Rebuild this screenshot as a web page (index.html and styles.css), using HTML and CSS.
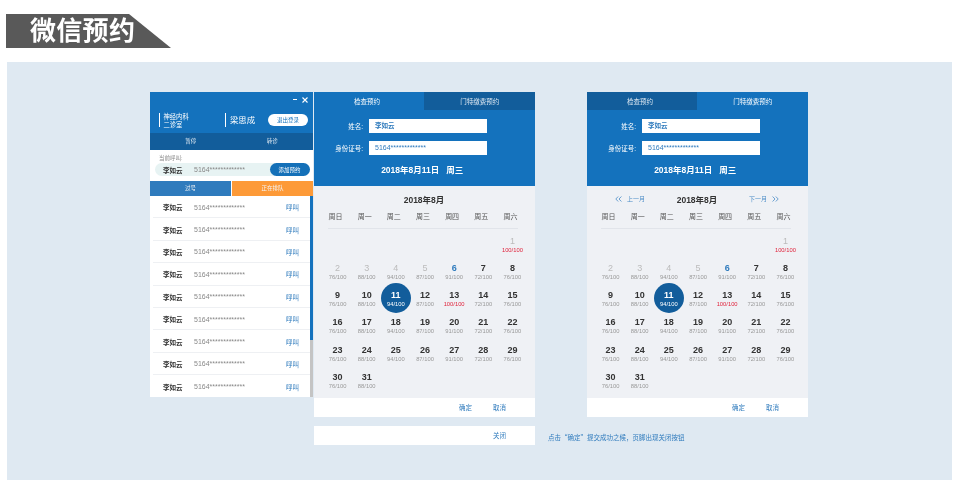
FILE: index.html
```html
<!DOCTYPE html>
<html lang="zh-CN">
<head>
    <meta charset="UTF-8">
    <title>微信预约</title>
    <link rel="stylesheet" href="styles.css">
</head>
<body>
    <header class="banner"><h1>微信预约</h1></header>

    <main class="stage">
        <!-- 医生端 -->
        <section class="desk">
            <div class="desk-head">
                <div class="win-btns">
                    <span class="win-min"></span>
                    <svg class="win-close" width="6" height="6" viewBox="0 0 6 6"><path d="M.5.5l5 5M5.5.5l-5 5" stroke="#fff" stroke-width="1.1"/></svg>
                </div>
                <div class="desk-info">
                    <div class="dept">神经内科<br>二诊室</div>
                    <div class="doctor">梁思成</div>
                    <button class="logout">退出登录</button>
                </div>
            </div>
            <div class="desk-actions"><span>暂停</span><span>转诊</span></div>
            <div class="current">
                <div class="current-label">当前呼叫:</div>
                <div class="current-row">
                    <b>李如云</b><span class="id-no">5164*************</span>
                    <button class="add-btn">添加预约</button>
                </div>
            </div>
            <div class="queue-tabs"><span class="tab-pass">过号</span><span class="tab-wait">正在排队</span></div>
            <div class="queue">
                <ul id="queue-list"></ul>
                <div class="scrollbar"><div class="scroll-thumb"></div></div>
            </div>
        </section>

        <!-- 预约弹窗：检查预约 -->
        <div class="column first-col">
            <section class="card" id="card-a"></section>
            <div class="close-bar"><span>关闭</span></div>
        </div>

        <!-- 预约弹窗：门特缴费预约 -->
        <div class="column second-col">
            <section class="card" id="card-b"></section>
            <p class="note">点击“确定”提交成功之候，页脚出现关闭按钮</p>
        </div>
    </main>

    <script src="script.js"></script>
</body>
</html>
```

FILE: styles.css
```css
* {
    margin: 0;
    padding: 0;
    box-sizing: border-box;
    font-family: "Liberation Sans", "Noto Sans CJK SC", sans-serif;
}

html, body {
    width: 967px;
    height: 495px;
    overflow: hidden;
    background: #fff;
}

body {
    filter: blur(0.3px);
}

ul {
    list-style: none;
}

button {
    border: none;
}

.banner {
    width: 165px;
    height: 34px;
    margin: 14px 0 14px 6px;
    padding-left: 24px;
    background: #595959;
    clip-path: polygon(0 0, 123px 0, 100% 100%, 0 100%);
}

.banner h1 {
    font-size: 26px;
    line-height: 34px;
    font-weight: 700;
    color: #fff;
    letter-spacing: 0.3px;
}

.stage {
    display: flex;
    align-items: flex-start;
    width: 945px;
    height: 418px;
    margin-left: 7px;
    padding: 30px 0 0 143px;
    background: #dfe9f2;
}

/* 左侧医生面板 */
.desk {
    width: 163px;
    background: #fff;
}

.desk-head {
    height: 41px;
    padding: 3px 5px 0 9px;
    background: #1472bd;
    color: #fff;
}

.win-btns {
    display: flex;
    justify-content: flex-end;
    align-items: center;
    gap: 5.5px;
    height: 9px;
}

.win-min {
    width: 4px;
    height: 1px;
    background: #fff;
}

.desk-info {
    display: flex;
    align-items: center;
    margin-top: 8.5px;
}

.dept {
    width: 66px;
    height: 14.5px;
    padding-left: 3.5px;
    border-left: 1px solid #fff;
    font-size: 6.3px;
    line-height: 8.3px;
}

.doctor {
    width: 43px;
    height: 14.5px;
    padding-left: 4px;
    border-left: 1px solid #fff;
    font-size: 8.4px;
    line-height: 14.5px;
}

.logout {
    width: 40px;
    height: 12px;
    border-radius: 6px;
    background: #fff;
    color: #1472bd;
    font-size: 5.5px;
}

.desk-actions {
    display: flex;
    height: 17px;
    background: #125d9b;
    color: #dfe9f2;
    font-size: 5.5px;
    line-height: 17px;
    text-align: center;
}

.desk-actions span {
    flex: 1;
}

.current {
    height: 31px;
    padding: 4px 3.5px 0 5px;
}

.current-label {
    height: 8px;
    padding-left: 4px;
    font-size: 5.5px;
    line-height: 8px;
    color: #888;
}

.current-row {
    display: flex;
    align-items: center;
    height: 13px;
    margin-top: 1px;
    padding-left: 8px;
    border-radius: 6.5px;
    background: #e7f3f3;
    font-size: 6.5px;
}

.current-row b {
    width: 31px;
    color: #333;
}

.id-no {
    color: #888;
    font-size: 7px;
}

.add-btn {
    width: 40px;
    height: 13px;
    margin-left: auto;
    border-radius: 6.5px;
    background: #1470b8;
    color: #fff;
    font-size: 5.5px;
}

.queue-tabs {
    display: flex;
    height: 15px;
    color: #f4f4f4;
    font-size: 5.5px;
    line-height: 15px;
    text-align: center;
}

.tab-pass {
    width: 81px;
    background: #2f7bbd;
}

.tab-wait {
    flex: 1;
    margin-left: 1px;
    background: #fd9a38;
}

.queue {
    display: flex;
    height: 201px;
}

#queue-list {
    flex: 1;
    padding: 0 0 0 3px;
}

.queue-row {
    display: flex;
    align-items: center;
    height: 22.4px;
    padding: 1px 11px 0 10px;
    border-bottom: 1px solid #eef0f3;
    font-size: 6.5px;
}

.queue-row:last-child {
    border-bottom: none;
}

.queue-row b {
    width: 31px;
    color: #333;
}

.queue-row .call {
    margin-left: auto;
    color: #2f7bbd;
}

.scrollbar {
    width: 3px;
    background: #c4c4c4;
}

.scroll-thumb {
    height: 144px;
    background: #1472bd;
}

/* 右侧弹窗 */
.first-col {
    width: 221.5px;
    margin-left: 0.5px;
}

.second-col {
    width: 221.5px;
    margin-left: 51.5px;
}

.card {
    background: #eff1f5;
}

.card-tabs {
    display: flex;
    height: 18px;
    background: #1472bd;
    color: #dfe9f2;
    font-size: 6.5px;
    line-height: 19px;
    text-align: center;
}

.card-tabs span {
    width: 50%;
    background: #125d9b;
}

.card-tabs span:first-child {
    padding-right: 4px;
}

.card-tabs .on {
    background: #1472bd;
    color: #fff;
}

.card-form {
    height: 76px;
    padding-top: 8.7px;
    background: #1472bd;
    color: #fff;
}

.field {
    display: flex;
    align-items: center;
    height: 14.3px;
    margin-bottom: 8px;
    font-size: 6.5px;
}

.field label {
    width: 49.5px;
    text-align: right;
    white-space: nowrap;
}

.field div {
    width: 118px;
    height: 14.3px;
    margin-left: 6px;
    padding-left: 6px;
    background: #fff;
    color: #2f7bbd;
    font-size: 7px;
    line-height: 14.3px;
}

.field .name {
    font-size: 6.5px;
    font-weight: 700;
}

.date-title {
    margin-top: 5.5px;
    padding-right: 4px;
    font-size: 8.5px;
    line-height: 14px;
    font-weight: 700;
    text-align: center;
}

.cal {
    height: 212px;
    padding: 8.5px 8px 0 9.5px;
}

.cal-month {
    display: flex;
    justify-content: center;
    align-items: center;
    position: relative;
    height: 9px;
    padding-right: 2px;
    color: #333;
    font-size: 8.5px;
    font-weight: 700;
}

.month-link {
    position: absolute;
    top: -1px;
    display: flex;
    align-items: center;
    gap: 5px;
    height: 9px;
    color: #4a8cc7;
    font-size: 6px;
    font-weight: 400;
}

.month-link svg {
    margin-top: 2px;
}

.month-link.prev {
    left: 19px;
}

.month-link.next {
    right: 21px;
}

.cal-week {
    display: grid;
    grid-template-columns: repeat(7, 1fr);
    height: 10px;
    margin: 8.5px 2px 0 -2px;
    color: #555;
    font-size: 7px;
    line-height: 10px;
    text-align: center;
}

.cal-rule {
    height: 1px;
    margin: 6px 9px 0 5px;
    background: #e1e4ea;
}

.cal-days {
    display: grid;
    grid-template-columns: repeat(7, 1fr);
    grid-auto-rows: 27.3px;
    margin-top: 4.5px;
    text-align: center;
}

.day {
    position: relative;
    padding-top: 2px;
    z-index: 0;
}

.day b {
    display: block;
    color: #333;
    font-size: 9px;
    line-height: 11px;
}

.day small {
    display: block;
    color: #999;
    font-size: 5.8px;
    line-height: 7px;
}

.day.past b {
    color: #bbb;
    font-weight: 400;
}

.day.today b {
    color: #2f7bbd;
}

.day.full small {
    color: #e0243c;
}

.day.sel b,
.day.sel small {
    color: #fff;
}

.day.sel::before {
    content: "";
    position: absolute;
    left: 50%;
    top: -5px;
    z-index: -1;
    width: 30px;
    height: 30px;
    margin-left: -15px;
    border-radius: 50%;
    background: #125d9b;
}

.card-foot {
    display: flex;
    justify-content: flex-end;
    gap: 21px;
    height: 19px;
    padding-right: 29px;
    background: #fff;
    color: #2f7bbd;
    font-size: 6.5px;
    line-height: 20px;
}

.close-bar {
    height: 19px;
    margin-top: 9px;
    padding-right: 29px;
    background: #fff;
    color: #2f7bbd;
    font-size: 6.5px;
    line-height: 20px;
    text-align: right;
}

.note {
    margin: 16px 0 0 -38.5px;
    color: #2f7bbd;
    font-family: "Noto Sans CJK SC", sans-serif;
    font-size: 6.5px;
    line-height: 9px;
    white-space: nowrap;
}
```

FILE: script.js
```js
// 队列
const list = document.getElementById('queue-list');
for (let i = 0; i < 9; i++) {
    const li = document.createElement('li');
    li.className = 'queue-row';
    li.innerHTML = '<b>李如云</b><span class="id-no">5164*************</span><span class="call">呼叫</span>';
    list.appendChild(li);
}

// 8月每天的号量，按周循环
const counts = ['76', '88', '94', '87', '91', '72', '76'];
const weekNames = ['周日', '周一', '周二', '周三', '周四', '周五', '周六'];

const chevLeft = '<svg width="7" height="6" viewBox="0 0 7 6"><path d="M3.2.5L.8 3l2.4 2.5M6.4.5L4 3l2.4 2.5" fill="none" stroke="#4a8cc7" stroke-width=".8"/></svg>';
const chevRight = '<svg width="7" height="6" viewBox="0 0 7 6"><path d="M.6.5L3 3 .6 5.5M3.8.5L6.2 3 3.8 5.5" fill="none" stroke="#4a8cc7" stroke-width=".8"/></svg>';

function dayCell(d) {
    const col = (d + 5) % 7;
    let cls = 'day';
    let used = counts[col] + '/100';
    if (d === 1 || d === 13) { used = '100/100'; cls += ' full'; }
    if (d >= 1 && d <= 5) cls += ' past';
    if (d === 6) cls += ' today';
    if (d === 11) cls += ' sel';
    return `<div class="${cls}"><b>${d}</b><small>${used}</small></div>`;
}

function buildCard(id, activeTab, withLinks) {
    let days = '<div></div>'.repeat(6);
    for (let d = 1; d <= 31; d++) days += dayCell(d);

    const prev = withLinks ? `<span class="month-link prev">${chevLeft}上一月</span>` : '';
    const next = withLinks ? `<span class="month-link next">下一月${chevRight}</span>` : '';

    document.getElementById(id).innerHTML = `
        <div class="card-tabs">
            <span class="${activeTab === 0 ? 'on' : ''}">检查预约</span>
            <span class="${activeTab === 1 ? 'on' : ''}">门特缴费预约</span>
        </div>
        <div class="card-form">
            <div class="field"><label>姓名:</label><div class="name">李如云</div></div>
            <div class="field"><label>身份证号:</label><div>5164*************</div></div>
            <div class="date-title">2018年8月11日&nbsp;&nbsp;&nbsp;周三</div>
        </div>
        <div class="cal">
            <div class="cal-month">${prev}2018年8月${next}</div>
            <div class="cal-week">${weekNames.map(w => `<span>${w}</span>`).join('')}</div>
            <div class="cal-rule"></div>
            <div class="cal-days">${days}</div>
        </div>
        <div class="card-foot"><span>确定</span><span>取消</span></div>
    `;
}

buildCard('card-a', 0, false);
buildCard('card-b', 1, true);
```
